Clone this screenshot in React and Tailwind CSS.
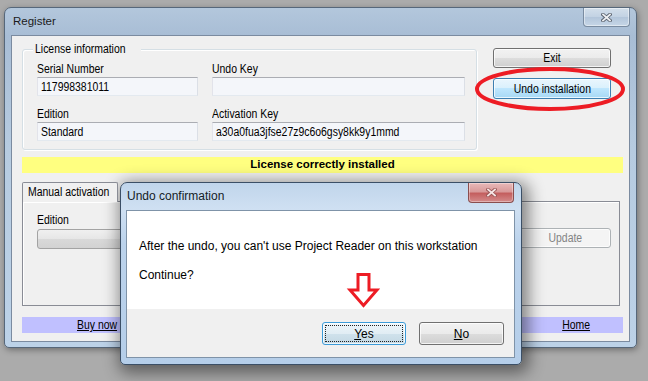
import React from "react";

// narrow text: the app font is condensed, so squeeze Liberation Sans a bit
const N = ({ children, className = "" }) => (
  <span className={"inline-block whitespace-nowrap scale-x-[0.87] " + className}>
    {children}
  </span>
);

const Label = ({ children, className = "" }) => (
  <div className={"h-[14px] leading-[14px] text-[12px] text-black " + className}>
    <N className="origin-left">{children}</N>
  </div>
);

const Field = ({ children, className = "" }) => (
  <div
    className={
      "h-[19px] bg-[#f4f6fa] border border-t-[#abadb3] border-l-[#e2e3ea] border-r-[#dbdfe6] border-b-[#e3e9ef] pl-[3px] flex items-center text-[12px] text-black " +
      className
    }
  >
    <N className="origin-left">{children}</N>
  </div>
);

const WinBtn = ({ children, className = "" }) => (
  <div
    className={
      "flex items-center justify-center rounded-[3px] border text-[12px] shadow-[inset_0_0_0_1px_rgba(255,255,255,0.75)] " +
      className
    }
  >
    {children}
  </div>
);

const GRAY_BTN =
  "border-[#707070] bg-[linear-gradient(180deg,#f2f2f2_0%,#ebebeb_50%,#dddddd_50%,#cfcfcf_100%)] text-black";

const XGlyph = ({ outline, fill }) => (
  <svg width="11" height="9" viewBox="0 0 11 9">
    <path d="M2 1.5 L9 7.5 M9 1.5 L2 7.5" stroke={outline} strokeWidth="3.6" strokeLinecap="square" />
    <path d="M2 1.5 L9 7.5 M9 1.5 L2 7.5" stroke={fill} strokeWidth="1.7" strokeLinecap="square" />
  </svg>
);

const MainWindow = () => (
  <div className="absolute left-[4px] top-[7px] w-[633px] h-[341px] rounded-t-[7px] rounded-b-[5px] border border-[#56677a] bg-[linear-gradient(180deg,#b3c7dc_0px,#a8bdd5_28px,#b6cbe0_140px,#bcd2e8_100%)] shadow-[1px_2px_6px_rgba(0,0,0,0.35)] px-[6px] pb-[5px] flex flex-col">
    <div className="h-[27px] flex justify-between">
      <div className="ml-[2px] leading-[27px] text-[11.5px] text-[#1b1b1b]">Register</div>
      <div className="w-[47px] h-[19px] rounded-b-[4px] border border-t-0 border-[#7a8ca1] bg-[linear-gradient(180deg,#d3dfeb_0%,#c2d2e3_50%,#b2c5da_50%,#c6d6e7_100%)] shadow-[inset_0_0_0_1px_rgba(255,255,255,0.45)] flex items-center justify-center">
        <XGlyph outline="#5b6470" fill="#eef0f3" />
      </div>
    </div>

    <div className="w-[619px] h-[307px] bg-[#f0f0f0] border border-[#7b8ba0] pt-[12px] pl-[10px] flex flex-col">
      {/* license info + buttons */}
      <div className="flex">
        <div className="relative mt-[1px] w-[455px] h-[101px] border border-[#d5dfe5] rounded-[3px] shadow-[inset_1px_1px_0_#fff,1px_1px_0_#fff] pt-[12px] pl-[14px] flex gap-[14px]">
          <div className="absolute -top-[8px] left-[10px] px-[2px] bg-[#f0f0f0] leading-[14px] text-[12px] text-black">
            <N className="origin-left">License information</N>
          </div>
          <div className="w-[161px] flex flex-col">
            <Label>Serial Number</Label>
            <Field className="mt-[1px]">117998381011</Field>
            <Label className="mt-[11px]">Edition</Label>
            <Field className="mt-[1px]">Standard</Field>
          </div>
          <div className="w-[253px] flex flex-col">
            <Label>Undo Key</Label>
            <Field className="mt-[1px]"></Field>
            <Label className="mt-[11px]">Activation Key</Label>
            <Field className="mt-[1px]">a30a0fua3jfse27z9c6o6gsy8kk9y1mmd</Field>
          </div>
        </div>
        <div className="ml-[16px] w-[118px] flex flex-col">
          <WinBtn className={"h-[20px] " + GRAY_BTN}>
            <N>Exit</N>
          </WinBtn>
          <WinBtn className="mt-[10px] h-[21px] border-[#3c7fb1] bg-[linear-gradient(180deg,#eaf6fd_0%,#d9f0fc_50%,#bee6fd_50%,#a7d9f5_100%)] text-black">
            <N>Undo installation</N>
          </WinBtn>
        </div>
      </div>

      {/* status */}
      <div className="mt-[7px] w-[601px] h-[16px] bg-[#ffff80] flex items-center justify-center text-[11.5px] font-bold text-black">
        License correctly installed
      </div>

      {/* manual activation tab */}
      <div className="mt-[9px] flex flex-col">
        <div className="relative z-10 w-[96px] h-[20px] border border-b-0 border-[#898c95] rounded-t-[2px] bg-[#f0f0f0] pl-[5px] leading-[18px] text-[12px] text-black">
          <N className="origin-left">Manual activation</N>
        </div>
        <div className="-mt-[1px] w-[598px] h-[105px] border border-[#898c95] bg-[#f0f0f0] shadow-[inset_1px_1px_0_#fff] pt-[11px] pl-[14px] flex items-start">
          <div className="flex flex-col">
            <Label>Edition</Label>
            <div className="mt-[2px] w-[260px] h-[20px] rounded-[3px] border border-[#a3a3a3] bg-[linear-gradient(180deg,#f0f0f0_0%,#e6e6e6_50%,#d9d9d9_50%,#d2d2d2_100%)]"></div>
          </div>
          <WinBtn className="ml-auto mr-[8px] mt-[15px] w-[92px] h-[20px] border-[#adb2b5] bg-[#f4f4f4] text-[#838383]">
            <N>Update</N>
          </WinBtn>
        </div>
      </div>

      {/* links */}
      <div className="mt-[11px] w-[601px] h-[16px] bg-[#c0c0ff] pl-[55px] pr-[33px] flex items-center justify-between text-[12px] leading-[14px] text-black">
        <N className="origin-left underline">Buy now</N>
        <N className="origin-right underline">Home</N>
      </div>
    </div>
  </div>
);

const Dialog = () => (
  <div className="absolute left-[120px] top-[182px] w-[402px] h-[183px] rounded-t-[7px] rounded-b-[5px] border border-[#3b4f66] bg-[linear-gradient(180deg,#c0d5eb_0px,#cfe0f2_26px,#bcd3ec_60px,#b5cee9_100%)] shadow-[3px_4px_16px_4px_rgba(0,0,0,0.45)] pl-[5px] pr-[6px] pb-[6px] flex flex-col font-['Liberation_Sans',Arial,sans-serif]">
    <div className="h-[27px] flex justify-between">
      <div className="ml-[1px] leading-[27px] text-[12px] text-[#141c26]">Undo confirmation</div>
      <div className="mr-[1px] w-[46px] h-[20px] rounded-b-[4px] border border-t-0 border-[#8a4e4e] bg-[linear-gradient(180deg,#e8b9b9_0%,#d99a9a_45%,#c45f5f_55%,#d48b8b_100%)] shadow-[inset_0_0_0_1px_rgba(255,255,255,0.35)] flex items-center justify-center">
        <XGlyph outline="#9a5757" fill="#f7e6e6" />
      </div>
    </div>
    <div className="w-[389px] h-[148px] border border-[#7f93a8] bg-white flex flex-col">
      <div className="h-[98px] pl-[12px] pt-[27px] text-[12px] leading-[16px] text-black">
        <div>After the undo, you can't use Project Reader on this workstation</div>
        <div className="mt-[13px]">Continue?</div>
      </div>
      <div className="flex-1 bg-[#f0f0f0] flex justify-end gap-[13px] pr-[10px] pt-[13px]">
        <WinBtn className="relative w-[84px] h-[23px] border-[#3c9bd8] bg-[linear-gradient(180deg,#edf5fa_0%,#e1edf4_50%,#d0e2ec_50%,#c3d8e4_100%)] text-black">
          <span className="absolute inset-[2px] border border-dotted border-[#222]"></span>
          <span>
            <span className="underline">Y</span>es
          </span>
        </WinBtn>
        <WinBtn className={"w-[85px] h-[23px] " + GRAY_BTN}>
          <span>
            <span className="underline">N</span>o
          </span>
        </WinBtn>
      </div>
    </div>
  </div>
);

export default function App() {
  return (
    <div className="relative w-[648px] h-[381px] overflow-hidden bg-[#ababab] font-['Liberation_Sans',Arial,sans-serif]">
      <MainWindow />
      <Dialog />
      {/* red annotation ellipse */}
      <svg className="absolute left-[473px] top-[65px]" width="154" height="48" viewBox="473 65 154 48">
        <ellipse cx="550" cy="89" rx="73" ry="20" fill="none" stroke="#ed1c24" strokeWidth="4" />
      </svg>
      {/* red annotation arrow */}
      <svg className="absolute left-[346px] top-[270px]" width="34" height="40" viewBox="346 270 34 40">
        <polygon
          points="358,274.5 369,274.5 369,290 377,290 363.5,305.5 350,290 358,290"
          fill="#ffffff"
          stroke="#ed1c24"
          strokeWidth="3"
        />
      </svg>
    </div>
  );
}
